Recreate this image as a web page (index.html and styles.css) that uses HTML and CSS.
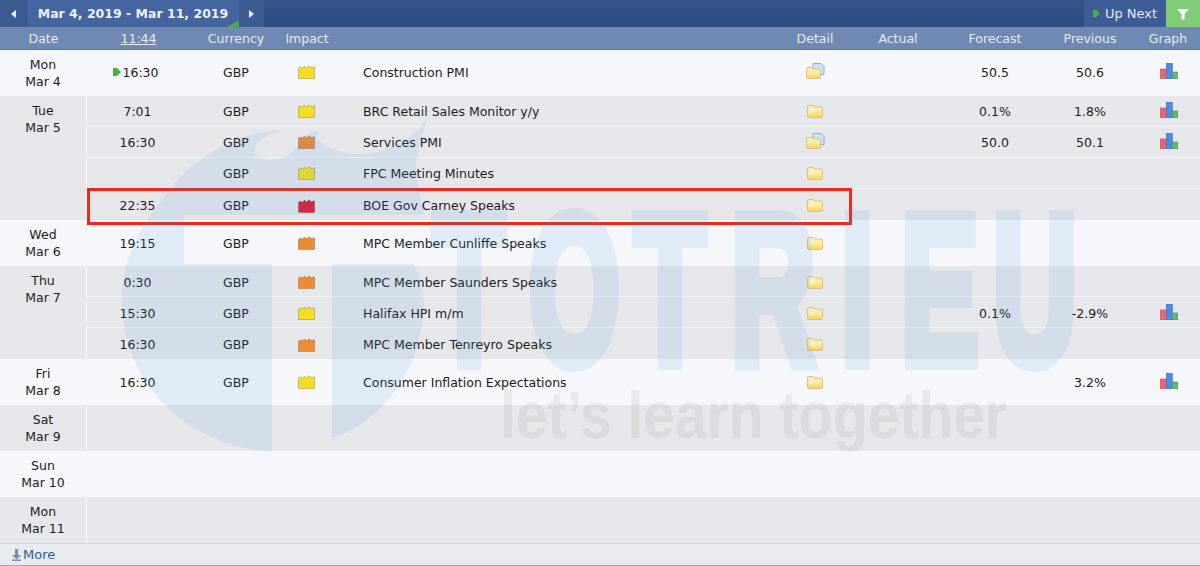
FILE: index.html
```html
<!DOCTYPE html>
<html lang="en">
<head>
<meta charset="utf-8">
<title>Calendar</title>
<link rel="stylesheet" href="styles.css">
</head>
<body>
<svg class="defs" width="0" height="0" aria-hidden="true">
  <defs>
    <linearGradient id="fold" x1="0" y1="0" x2="0" y2="1"><stop offset="0" stop-color="#fbefc0"/><stop offset=".5" stop-color="#fdeb9e"/><stop offset="1" stop-color="#f8d257"/></linearGradient>
    <symbol id="impact" viewBox="0 0 17 14"><path d="M.5 3.200 2.500 2 4.500 3.200 6.500 1 8.500 3 11 .8 13 2.800 16.500 1.800V13.500H.5Z" fill="currentColor" stroke="#000" stroke-opacity=".2"/></symbol>
    <symbol id="folder" viewBox="0 0 16 13"><path d="M.5 2Q.5 .5 2 .5H6L7.500 2H14Q15.500 2 15.500 3.500V11Q15.500 12.500 14 12.500H2Q.5 12.500 .5 11Z" fill="url(#fold)" stroke="#dfc084"/><path d="M2.500 6 7.500 3.500V5.500L2.500 8Z" fill="#fff" opacity=".75"/></symbol>
    <symbol id="folderdoc" viewBox="0 0 19 16"><path d="M7 1Q7 .5 8 .5H15L18 3.500V11.500H7Z" fill="#cfe0f3" stroke="#8fadd0"/><path d="M2 4.500H6L7.500 6H13Q14.500 6 14.500 7.500V14Q14.500 15.500 13 15.500H2Q.5 15.500 .5 14V6Q.5 4.500 2 4.500Z" fill="url(#fold)" stroke="#dfc084"/></symbol>
    <symbol id="graph" viewBox="0 0 18 16"><rect x=".3" y="6" width="6" height="9.700" fill="#e9656c" stroke="#d0525a" stroke-width=".6"/><rect x="6.300" y=".3" width="6" height="15.400" fill="#4b8de3" stroke="#3a6dbd" stroke-width=".6"/><rect x="12.300" y="9" width="5.400" height="6.700" fill="#65b673" stroke="#4a9657" stroke-width=".6"/></symbol>
    <symbol id="play" viewBox="0 0 8 8"><path d="M0 0H4L8 4 4 8H0Z" fill="#48b04a"/></symbol>
  </defs>
</svg>

<main class="cal">
  <header class="topbar">
    <nav class="range">
      <a class="nav-arrow"><span class="tri-left"></span></a>
      <a class="range-label">Mar 4, 2019 - Mar 11, 2019<span class="corner"></span></a>
      <a class="nav-arrow next"><span class="tri-right"></span></a>
    </nav>
    <div class="tools">
      <a class="upnext"><svg class="ico-upnext"><use href="#play"/></svg>Up Next</a>
      <a class="filter"><svg class="ico-filter" viewBox="0 0 12 12"><path d="M0 1H12L7.500 6V11.500H4.500V6Z" fill="#fff"/></svg></a>
    </div>
  </header>

  <div class="colhead">
    <div class="date-h">Date</div>
    <div class="grid">
      <span><u>11:44</u></span><span>Currency</span><span>Impact</span><span></span><span>Detail</span><span>Actual</span><span>Forecast</span><span>Previous</span><span>Graph</span>
    </div>
  </div>

  <section class="day light">
    <div class="date">Mon<br>Mar 4</div>
    <div class="events">
      <div class="grid row tall first">
        <span class="now"><svg class="ico-play"><use href="#play"/></svg>16:30</span><span>GBP</span><span><svg class="ico-imp yellow"><use href="#impact"/></svg></span><span class="name">Construction PMI</span><span><svg class="ico-fd"><use href="#folderdoc"/></svg></span><span></span><span>50.5</span><span>50.6</span><span><svg class="ico-gr"><use href="#graph"/></svg></span>
      </div>
    </div>
  </section>

  <section class="day dark">
    <div class="date">Tue<br>Mar 5</div>
    <div class="events">
      <div class="grid row">
        <span>7:01</span><span>GBP</span><span><svg class="ico-imp yellow"><use href="#impact"/></svg></span><span class="name">BRC Retail Sales Monitor y/y</span><span><svg class="ico-f"><use href="#folder"/></svg></span><span></span><span>0.1%</span><span>1.8%</span><span><svg class="ico-gr"><use href="#graph"/></svg></span>
      </div>
      <div class="grid row">
        <span>16:30</span><span>GBP</span><span><svg class="ico-imp orange"><use href="#impact"/></svg></span><span class="name">Services PMI</span><span><svg class="ico-fd"><use href="#folderdoc"/></svg></span><span></span><span>50.0</span><span>50.1</span><span><svg class="ico-gr"><use href="#graph"/></svg></span>
      </div>
      <div class="grid row">
        <span></span><span>GBP</span><span><svg class="ico-imp yellow"><use href="#impact"/></svg></span><span class="name">FPC Meeting Minutes</span><span><svg class="ico-f"><use href="#folder"/></svg></span><span></span><span></span><span></span><span></span>
      </div>
      <div class="grid row low">
        <span>22:35</span><span>GBP</span><span><svg class="ico-imp red"><use href="#impact"/></svg></span><span class="name">BOE Gov Carney Speaks</span><span><svg class="ico-f"><use href="#folder"/></svg></span><span></span><span></span><span></span><span></span>
      </div>
    </div>
  </section>

  <section class="day light">
    <div class="date">Wed<br>Mar 6</div>
    <div class="events">
      <div class="grid row tall">
        <span>19:15</span><span>GBP</span><span><svg class="ico-imp orange"><use href="#impact"/></svg></span><span class="name">MPC Member Cunliffe Speaks</span><span><svg class="ico-f"><use href="#folder"/></svg></span><span></span><span></span><span></span><span></span>
      </div>
    </div>
  </section>

  <section class="day dark">
    <div class="date">Thu<br>Mar 7</div>
    <div class="events">
      <div class="grid row low">
        <span>0:30</span><span>GBP</span><span><svg class="ico-imp orange"><use href="#impact"/></svg></span><span class="name">MPC Member Saunders Speaks</span><span><svg class="ico-f"><use href="#folder"/></svg></span><span></span><span></span><span></span><span></span>
      </div>
      <div class="grid row low">
        <span>15:30</span><span>GBP</span><span><svg class="ico-imp yellow"><use href="#impact"/></svg></span><span class="name">Halifax HPI m/m</span><span><svg class="ico-f"><use href="#folder"/></svg></span><span></span><span>0.1%</span><span>-2.9%</span><span><svg class="ico-gr"><use href="#graph"/></svg></span>
      </div>
      <div class="grid row low">
        <span>16:30</span><span>GBP</span><span><svg class="ico-imp orange"><use href="#impact"/></svg></span><span class="name">MPC Member Tenreyro Speaks</span><span><svg class="ico-f"><use href="#folder"/></svg></span><span></span><span></span><span></span><span></span>
      </div>
    </div>
  </section>

  <section class="day light">
    <div class="date">Fri<br>Mar 8</div>
    <div class="events">
      <div class="grid row tall">
        <span>16:30</span><span>GBP</span><span><svg class="ico-imp yellow"><use href="#impact"/></svg></span><span class="name">Consumer Inflation Expectations</span><span><svg class="ico-f"><use href="#folder"/></svg></span><span></span><span></span><span>3.2%</span><span><svg class="ico-gr"><use href="#graph"/></svg></span>
      </div>
    </div>
  </section>

  <section class="day dark"><div class="date">Sat<br>Mar 9</div><div class="events"><div class="row tall"></div></div></section>
  <section class="day light"><div class="date">Sun<br>Mar 10</div><div class="events"><div class="row tall"></div></div></section>
  <section class="day dark"><div class="date">Mon<br>Mar 11</div><div class="events"><div class="row tall"></div></div></section>

  <footer class="more"><svg class="ico-down" viewBox="0 0 9 12"><path d="M3 0H6V6H9L4.500 10.500 0 6H3ZM0 10.500H9V12H0Z" fill="#6f93bd"/></svg>More</footer>

  <div class="highlight"></div>

  <svg class="watermark" viewBox="0 0 1200 566" aria-hidden="true">
    <g class="wm-blue">
      <path d="M184 215H425C420 195 414 175 417 158 419 145 424 130 427 118 410 145 375 158 345 153 325 148 312 140 318 131 300 133 300 150 285 157 270 163 250 160 256 145 258 140 268 134 280 131 240 130 190 160 170 190 140 225 122 260 122 300 122 385 190 448 272 451V264H184Z"/>
      <path d="M332 264H414C422 280 426 300 423 320 415 380 375 425 332 438Z"/>
      <text class="wm-title" transform="scale(.55 1)" y="363" x="788 962 1153 1329 1529 1638 1805">TOTRIEU</text>
    </g>
    <text class="wm-tag" x="500" y="438" textLength="507" lengthAdjust="spacingAndGlyphs">let’s learn together</text>
  </svg>
</main>
</body>
</html>
```
FILE: styles.css
```css
* { box-sizing: border-box; }

html, body {
  margin: 0;
  height: 100%;
  overflow: hidden;
  background: #f5f7fa;
}

body {
  font-family: "DejaVu Sans", Verdana, sans-serif;
  font-size: 12.5px;
  color: #1c1c1c;
}

.defs { position: absolute; }

.cal {
  position: relative;
  width: 1200px;
  height: 566px;
  display: flex;
  flex-direction: column;
  overflow: hidden;
}

/* top bar */
.topbar {
  height: 27px;
  display: flex;
  justify-content: space-between;
  background: linear-gradient(#375487, #2c4b81);
  flex: none;
}
.range, .tools { display: flex; }
.nav-arrow {
  width: 26px;
  display: flex;
  align-items: center;
  justify-content: center;
  background: #3c5b92;
}
.nav-arrow.next { width: 25px; }
.tri-left, .tri-right {
  width: 0;
  height: 0;
  border-style: solid;
  border-color: transparent;
  border-width: 4px 0;
}
.tri-left { border-right: 5px solid #eef1f6; }
.tri-right { border-left: 5px solid #eef1f6; }
.range-label {
  position: relative;
  width: 212px;
  margin-left: 1px;
  display: flex;
  align-items: center;
  justify-content: center;
  background: #44659f;
  color: #eef1f7;
  font-weight: 700;
  white-space: nowrap;
}
.corner {
  position: absolute;
  right: 0;
  bottom: 0;
  border-style: solid;
  border-width: 0 0 7px 12px;
  border-color: transparent transparent #3fae4d transparent;
}
.upnext {
  width: 82px;
  display: flex;
  align-items: center;
  justify-content: center;
  gap: 5px;
  background: #3e5d96;
  color: #e6ebf3;
  font-size: 13px;
}
.ico-upnext { width: 7px; height: 7px; }
.filter {
  width: 34px;
  display: flex;
  align-items: center;
  justify-content: center;
  background: #80cc78;
}
.ico-filter { width: 12px; height: 12px; }

/* grid shared by column head and rows */
.grid {
  display: grid;
  grid-template-columns: 103px 92px 50px 448px 70px 96px 98px 92px 64px;
  align-items: center;
  text-align: center;
}
.grid > span { display: flex; align-items: center; justify-content: center; white-space: nowrap; }

.colhead {
  height: 23px;
  flex: none;
  display: flex;
  align-items: center;
  background: #7088b4;
  border-bottom: 1px solid #647ca8;
  color: #e6eaf2;
}
.date-h { width: 87px; text-align: center; }

/* day groups */
.day { display: flex; flex: none; }
.light { background: #f5f7fa; }
.dark { background: #e6e7ea; }
.date {
  width: 87px;
  flex: none;
  padding-top: 6px;
  line-height: 17px;
  text-align: center;
  border-right: 1px solid #f6f7f9;
}
.events { flex: 1; }
.row {
  height: 31px;
  border-bottom: 1px solid #f3f4f7;
}
.row:last-child { border-bottom: 0; }
.row.tall { height: 46px; }
.row.low { padding-top: 2px; }
.row.first { padding-bottom: 2px; }
.row > span:first-child:not(.now) { padding-right: 2px; }
.grid > span.name { justify-content: flex-start; padding-left: 31px; }
.now { padding-right: 5px; }

/* icons */
.ico-imp { width: 17px; height: 14px; margin-left: -1px; }
.yellow { color: #f6dd1f; }
.orange { color: #ee8a2f; }
.red { color: #e01f2b; }
.ico-f { width: 16px; height: 13px; }
.ico-fd { width: 19px; height: 16px; margin-top: -2px; margin-left: 1px; }
.ico-gr { width: 18px; height: 16px; margin-top: -3px; margin-left: 1px; }
.ico-play { width: 8px; height: 8px; margin-right: 1px; }
.ico-down { width: 9px; height: 12px; margin-right: 2px; }

.more {
  flex: 1;
  display: flex;
  align-items: center;
  padding-left: 12px;
  background: #e9ebef;
  border-top: 1px solid #d4d6da;
  border-bottom: 1px solid #9fa5ad;
  color: #2b5c96;
  font-size: 13px;
}

/* overlays */
.highlight {
  position: absolute;
  left: 87px;
  top: 188px;
  width: 765px;
  height: 37px;
  border: 3px solid #e92a1c;
  pointer-events: none;
}
.watermark {
  position: absolute;
  inset: 0;
  width: 1200px;
  height: 566px;
  pointer-events: none;
}
.wm-blue { fill: rgb(60, 150, 225); opacity: .12; }
.wm-title {
  font-family: "Liberation Sans", Arial, sans-serif;
  font-weight: 700;
  font-size: 212px;
  stroke: rgb(60, 150, 225);
  stroke-width: 14px;
  stroke-linejoin: miter;
}
.wm-tag {
  font-family: "Liberation Sans", Arial, sans-serif;
  font-weight: 700;
  font-size: 66px;
  fill: #888;
  opacity: .13;
}
```
